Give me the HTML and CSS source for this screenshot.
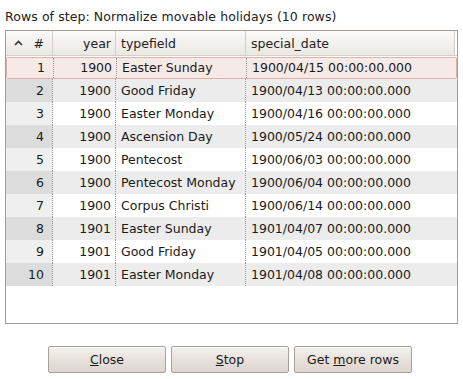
FILE: index.html
```html
<!DOCTYPE html>
<html lang="en">
<head>
    <meta charset="UTF-8">
    <title>Rows of step</title>
    <link rel="stylesheet" href="styles.css">
</head>
<body>
    <div class="dialog">
        <div class="caption">Rows of step: Normalize movable holidays (10 rows)</div>

        <div class="grid">
            <div class="row head">
                <div class="cell num">
                    <svg class="sort" width="9" height="6" viewBox="0 0 9 6"><polyline points="1,5 4.5,1.5 8,5" fill="none" stroke="#333" stroke-width="1.6"/></svg>
                    <span>#</span>
                </div>
                <div class="cell year">year</div>
                <div class="cell type">typefield</div>
                <div class="cell date">special_date</div>
            </div>
            <div class="row selected">
                <div class="cell num">1</div><div class="cell year">1900</div><div class="cell type">Easter Sunday</div><div class="cell date">1900/04/15 00:00:00.000</div>
            </div>
            <div class="row">
                <div class="cell num">2</div><div class="cell year">1900</div><div class="cell type">Good Friday</div><div class="cell date">1900/04/13 00:00:00.000</div>
            </div>
            <div class="row">
                <div class="cell num">3</div><div class="cell year">1900</div><div class="cell type">Easter Monday</div><div class="cell date">1900/04/16 00:00:00.000</div>
            </div>
            <div class="row">
                <div class="cell num">4</div><div class="cell year">1900</div><div class="cell type">Ascension Day</div><div class="cell date">1900/05/24 00:00:00.000</div>
            </div>
            <div class="row">
                <div class="cell num">5</div><div class="cell year">1900</div><div class="cell type">Pentecost</div><div class="cell date">1900/06/03 00:00:00.000</div>
            </div>
            <div class="row">
                <div class="cell num">6</div><div class="cell year">1900</div><div class="cell type">Pentecost Monday</div><div class="cell date">1900/06/04 00:00:00.000</div>
            </div>
            <div class="row">
                <div class="cell num">7</div><div class="cell year">1900</div><div class="cell type">Corpus Christi</div><div class="cell date">1900/06/14 00:00:00.000</div>
            </div>
            <div class="row">
                <div class="cell num">8</div><div class="cell year">1901</div><div class="cell type">Easter Sunday</div><div class="cell date">1901/04/07 00:00:00.000</div>
            </div>
            <div class="row">
                <div class="cell num">9</div><div class="cell year">1901</div><div class="cell type">Good Friday</div><div class="cell date">1901/04/05 00:00:00.000</div>
            </div>
            <div class="row">
                <div class="cell num">10</div><div class="cell year">1901</div><div class="cell type">Easter Monday</div><div class="cell date">1901/04/08 00:00:00.000</div>
            </div>
        </div>

        <div class="buttons">
            <button class="btn"><u>C</u>lose</button>
            <button class="btn"><u>S</u>top</button>
            <button class="btn">Get <u>m</u>ore rows</button>
        </div>
    </div>
</body>
</html>
```

FILE: styles.css
```css
* {
    margin: 0;
    padding: 0;
    box-sizing: border-box;
}

body {
    background: #fff;
    font-family: "DejaVu Sans", sans-serif;
    font-size: 12.5px;
    color: #1a1a1a;
}

.dialog {
    width: 463px;
    height: 379px;
    padding: 9px 5px 0 5px;
}

.caption {
    height: 21px;
    line-height: 16px;
    color: #222;
    letter-spacing: 0.08px;
}

/* table */
.grid {
    width: 453px;
    height: 294px;
    border: 1px solid #a39c96;
    background: #fff;
}

.row {
    display: flex;
    height: 23px;
    line-height: 23px;
}

.row:nth-child(odd) .cell {
    background: #ececec;
}

.row:nth-child(odd) .num {
    background: #dcdcdc;
}

.row:nth-child(even) .num {
    background: #efefef;
}

.cell {
    white-space: nowrap;
    overflow: hidden;
    border-right: 1px dotted #9a9a9a;
}

.num {
    width: 47px;
    text-align: right;
    padding-right: 8px;
}

.year {
    width: 63px;
    text-align: right;
    padding-right: 4px;
}

.type {
    width: 130px;
    padding-left: 5px;
}

.date {
    flex: 1;
    padding-left: 5px;
    border-right: none;
}

.row.head {
    height: 25px;
    line-height: 25px;
    border-bottom: 1px solid #d6d0ca;
}

.row.head .cell {
    background: linear-gradient(#fbfaf9, #ebe7e2);
    border-right: 1px solid #d4cec8;
    color: #222;
}

.row.head .num {
    display: flex;
    align-items: center;
    justify-content: space-between;
    padding-left: 8px;
    background: linear-gradient(#fbfaf9, #ebe7e2);
}

.row.head .date {
    border-right: 1px solid #d4cec8;
    margin-right: 2px;
}

.sort {
    display: block;
}

.row.selected {
    margin-top: 1px;
    border: 1px solid #d9b2aa;
    border-radius: 2px;
    height: 22px;
    line-height: 20px;
}

.row.selected .cell {
    background: #f6e9e6;
}

/* buttons */
.buttons {
    display: flex;
    justify-content: center;
    gap: 5px;
    margin-top: 22px;
    padding-right: 3px;
}

.btn {
    width: 118px;
    height: 27px;
    font-family: "DejaVu Sans", sans-serif;
    font-size: 12.5px;
    color: #1a1a1a;
    border: 1px solid #a8a099;
    border-radius: 2px;
    background: linear-gradient(#f4f1ee, #e6e0da 55%, #ddd6cf);
    box-shadow: inset 0 1px 0 #fff;
}
```
